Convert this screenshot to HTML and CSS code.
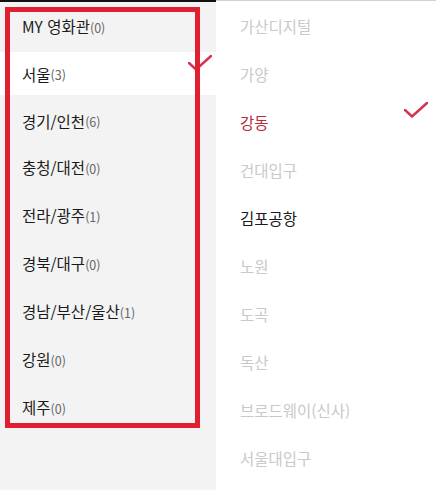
FILE: index.html
```html
<!DOCTYPE html>
<html lang="ko">

<head>
    <meta charset="UTF-8">
    <meta name="viewport" content="width=device-width, initial-scale=1.0">
    <title>극장 선택</title>
    <link rel="stylesheet" href="styles.css">
</head>

<body>
    <div class="theater">
        <!-- 지역 목록 -->
        <ul class="area">
            <li><span class="name">MY 영화관</span><span class="cnt">(0)</span></li>
            <li class="on"><span class="name">서울</span><span class="cnt">(3)</span>
                <svg class="check" width="24" height="18" viewBox="0 0 24 18"><polyline points="1,9 8,15.5 23,2" /></svg>
            </li>
            <li><span class="name">경기/인천</span><span class="cnt">(6)</span></li>
            <li><span class="name">충청/대전</span><span class="cnt">(0)</span></li>
            <li><span class="name">전라/광주</span><span class="cnt">(1)</span></li>
            <li><span class="name">경북/대구</span><span class="cnt">(0)</span></li>
            <li><span class="name">경남/부산/울산</span><span class="cnt">(1)</span></li>
            <li><span class="name">강원</span><span class="cnt">(0)</span></li>
            <li><span class="name">제주</span><span class="cnt">(0)</span></li>
        </ul>
        <!-- 극장 목록 -->
        <ul class="cinema">
            <li>가산디지털</li>
            <li>가양</li>
            <li class="on">강동
                <svg class="check" width="24" height="18" viewBox="0 0 24 18"><polyline points="1,9 8,15.5 23,2" /></svg>
            </li>
            <li>건대입구</li>
            <li class="able">김포공항</li>
            <li>노원</li>
            <li>도곡</li>
            <li>독산</li>
            <li>브로드웨이(신사)</li>
            <li>서울대입구</li>
        </ul>
        <!-- 강조 표시 박스 -->
        <div class="mark"></div>
    </div>
</body>

</html>
```
FILE: styles.css
```css
* {
    margin: 0;
    padding: 0;
}

body {
    font-family: "Noto Sans CJK KR", "Noto Sans", sans-serif;
}

.theater {
    width: 436px;
    height: 490px;
    display: flex;
    position: relative;
    overflow: hidden;
}

ul {
    list-style: none;
}

.area {
    width: 216px;
    background-color: #f3f3f3;
    border-top: 2px solid #111;
}

.area li {
    height: 48px;
    display: flex;
    align-items: center;
    padding: 0 4px 0 22px;
    font-size: 15.5px;
    color: #1a1a1a;
}

.area li.on {
    background-color: #fff;
    margin: 2px 0 3px;
    height: 43px;
}

.area li.on + li {
    height: 45px;
}

.area .cnt {
    font-size: 12.5px;
    color: #666;
    margin-top: 2px;
}

.area .check {
    margin-left: auto;
    margin-top: -22px;
}

.cinema {
    flex: 1;
    background-color: #fff;
    border-top: 1px solid #d0d0d0;
    padding-top: 1px;
}

.cinema li {
    height: 48px;
    display: flex;
    align-items: center;
    padding: 0 8px 0 24px;
    font-size: 15.5px;
    color: #c9c9c9;
}

.cinema li.on {
    color: #b8283f;
}

.cinema li.able {
    color: #1a1a1a;
}

.cinema .check {
    margin-left: auto;
    margin-top: -24px;
}

.check polyline {
    fill: none;
    stroke: #d8324f;
    stroke-width: 2.4;
    stroke-linecap: round;
    stroke-linejoin: round;
}

/* 빨간 강조 박스 */
.mark {
    position: absolute;
    left: 5px;
    top: 7px;
    width: 185px;
    height: 411px;
    border: 5px solid #e02030;
}
```
